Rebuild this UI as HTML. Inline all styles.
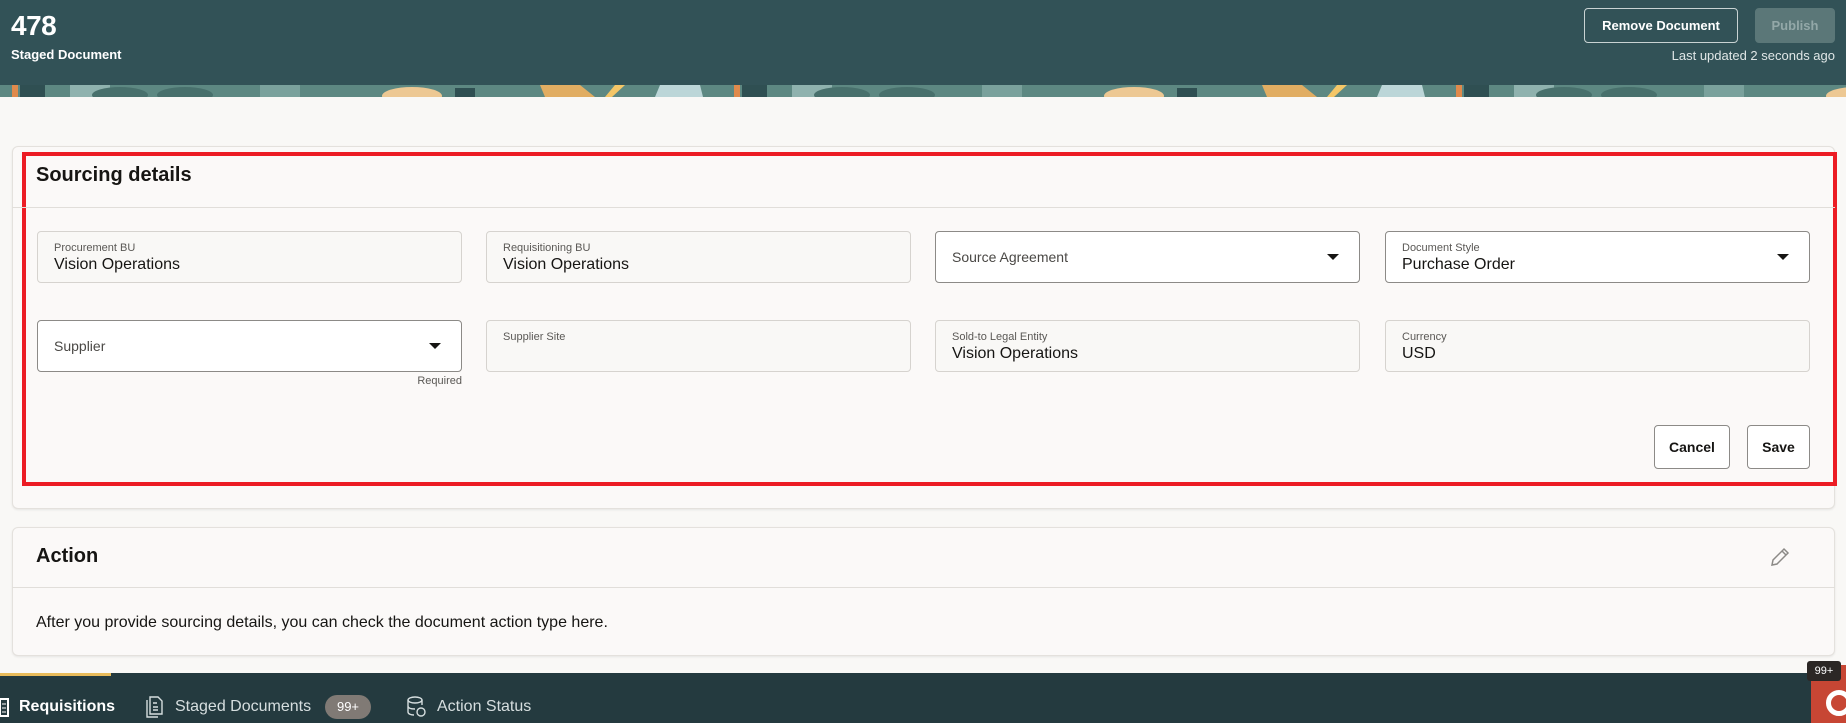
<!DOCTYPE html>
<html><head><meta charset="utf-8">
<style>
*{box-sizing:border-box;margin:0;padding:0}
body{width:1846px;height:723px;overflow:hidden;background:#f9f8f6;font-family:"Liberation Sans",sans-serif;color:#161513;position:relative}
.hdr{position:absolute;left:0;top:0;width:1846px;height:85px;background:#325257}
.band{position:absolute;left:0;top:85px;width:1846px;height:12px}
.t478{position:absolute;left:11px;top:10px;font-size:28px;font-weight:bold;color:#fff;letter-spacing:-0.5px}
.tsub{position:absolute;left:11px;top:47px;font-size:13px;font-weight:bold;color:#fff}
.btn{position:absolute;border:1px solid #c9d3d3;border-radius:4px;color:#fff;font-size:13px;font-weight:bold;display:flex;align-items:center;justify-content:center}
.upd{position:absolute;right:11px;top:48px;font-size:13px;color:#dfe6e6}
.card{position:absolute;left:12px;width:1823px;background:#fbf9f8;border:1px solid #e4e1dd;border-radius:6px;box-shadow:0 1px 2px rgba(0,0,0,.08)}
.red{position:absolute;left:22px;top:152px;width:1815px;height:334px;border:4px solid #ec1c24}
.h2{position:absolute;font-size:20px;font-weight:bold}
.div{position:absolute;left:12px;width:1823px;height:1px;background:#e1deda}
.f{position:absolute;width:425px;height:52px;border:1px solid #d6d3cf;border-radius:4px;background:#f9f8f6}
.f.s{background:#fff;border-color:#8c8a87}
.lab{position:absolute;left:16px;top:10px;font-size:11px;color:#5a5855}
.val{position:absolute;left:16px;top:24px;font-size:16px;color:#161513}
.ph{position:absolute;left:16px;top:17px;font-size:14px;color:#4a4845}
.car{position:absolute;right:20px;top:22px;width:0;height:0;border-left:6px solid transparent;border-right:6px solid transparent;border-top:6px solid #161513}
.b2{position:absolute;border:1px solid #8c8a87;border-radius:4px;background:#fff;font-size:14px;font-weight:bold;display:flex;align-items:center;justify-content:center;height:44px;top:425px}
.bot{position:absolute;left:0;top:673px;width:1846px;height:50px;background:#243a3f}
.tab{position:absolute;top:698px;font-size:16px;color:#d6dedf}
</style></head><body>
<div class="hdr"></div>
<svg class="band" width="1846" height="12" viewBox="0 0 1846 12">
<defs><pattern id="p" width="722" height="12" patternUnits="userSpaceOnUse">
<rect width="722" height="12" fill="#5d8882"/>
<rect x="12" y="0" width="6" height="12" fill="#e08a4c"/>
<rect x="20" y="0" width="25" height="12" fill="#2f4f52"/>
<rect x="70" y="0" width="40" height="12" fill="#8fb2ae"/>
<ellipse cx="120" cy="10" rx="28" ry="8" fill="#48706c"/>
<ellipse cx="185" cy="10" rx="28" ry="8" fill="#48706c"/>
<rect x="260" y="0" width="40" height="12" fill="#7aa19c"/>
<ellipse cx="412" cy="11" rx="30" ry="9" fill="#edc893"/>
<rect x="455" y="3" width="20" height="9" fill="#2f4f52"/>
<polygon points="540,0 580,0 595,12 545,12" fill="#e1ad62"/>
<polygon points="605,12 615,0 625,0 612,12" fill="#f4c667"/>
<polygon points="660,0 700,0 703,12 655,12" fill="#bcd6d8"/>
<rect x="735" y="0" width="6" height="12" fill="#e08a4c"/>
</pattern></defs>
<rect width="1846" height="12" fill="url(#p)"/>
</svg>
<div class="t478">478</div>
<div class="tsub">Staged Document</div>
<div class="btn" style="left:1584px;top:8px;width:154px;height:35px">Remove Document</div>
<div class="btn" style="left:1755px;top:8px;width:80px;height:35px;background:#5b7778;border-color:#5b7778;color:#93a8a8">Publish</div>
<div class="upd">Last updated 2 seconds ago</div>

<div class="card" style="top:146px;height:363px"></div>
<div class="red"></div>
<div class="h2" style="left:36px;top:164px">Sourcing details</div>
<div class="div" style="top:207px"></div>

<div class="f" style="left:37px;top:231px"><div class="lab">Procurement BU</div><div class="val">Vision Operations</div></div>
<div class="f" style="left:486px;top:231px"><div class="lab">Requisitioning BU</div><div class="val">Vision Operations</div></div>
<div class="f s" style="left:935px;top:231px"><div class="ph">Source Agreement</div><div class="car"></div></div>
<div class="f s" style="left:1385px;top:231px"><div class="lab">Document Style</div><div class="val">Purchase Order</div><div class="car"></div></div>

<div class="f s" style="left:37px;top:320px"><div class="ph">Supplier</div><div class="car"></div></div>
<div style="position:absolute;left:300px;width:162px;text-align:right;top:375px;font-size:11px;color:#5a5855">Required</div>
<div class="f" style="left:486px;top:320px"><div class="lab">Supplier Site</div></div>
<div class="f" style="left:935px;top:320px"><div class="lab">Sold-to Legal Entity</div><div class="val">Vision Operations</div></div>
<div class="f" style="left:1385px;top:320px"><div class="lab">Currency</div><div class="val">USD</div></div>

<div class="b2" style="left:1654px;width:76px">Cancel</div>
<div class="b2" style="left:1747px;width:63px">Save</div>

<div class="card" style="top:527px;height:129px"></div>
<div class="h2" style="left:36px;top:545px">Action</div>
<svg style="position:absolute;left:1769px;top:546px" width="22" height="22" viewBox="0 0 22 22"><path d="M3 19 L4 14 L15 3 L19 7 L8 18 Z M13 5 L17 9" fill="none" stroke="#8c8a87" stroke-width="1.5"/></svg>
<div class="div" style="top:587px"></div>
<div style="position:absolute;left:36px;top:614px;font-size:16px">After you provide sourcing details, you can check the document action type here.</div>

<div class="bot"></div>
<div style="position:absolute;left:0;top:673px;width:111px;height:3px;background:#e8bb5a"></div>
<svg style="position:absolute;left:0;top:698px" width="9" height="19"><rect x="0" y="1" width="8" height="17" fill="none" stroke="#fff" stroke-width="2"/><path d="M2 6h4M2 10h4M2 14h4" stroke="#fff"/></svg>
<div class="tab" style="left:19px;color:#fff;font-weight:bold">Requisitions</div>
<svg style="position:absolute;left:146px;top:696px" width="18" height="22"><path d="M1 4v17h11M4 1h8l4 4v13H4z M7 7h4M7 11h5M7 14h5" fill="none" stroke="#d6dedf" stroke-width="1.4"/></svg>
<div class="tab" style="left:175px">Staged Documents</div>
<div style="position:absolute;left:325px;top:695px;width:46px;height:24px;border-radius:12px;background:#807a75;color:#fff;font-size:13px;text-align:center;line-height:24px">99+</div>
<svg style="position:absolute;left:406px;top:696px" width="22" height="22"><ellipse cx="9" cy="4" rx="7" ry="3" fill="none" stroke="#d6dedf" stroke-width="1.4"/><path d="M2 4v12c0 2 3 3 6 3M16 4v5M2 10c0 2 3 3 7 3" fill="none" stroke="#d6dedf" stroke-width="1.4"/><circle cx="15" cy="16" r="4" fill="none" stroke="#d6dedf" stroke-width="1.4"/></svg>
<div class="tab" style="left:437px">Action Status</div>

<div style="position:absolute;left:1811px;top:665px;width:35px;height:58px;background:#c74634"></div>
<div style="position:absolute;left:1826px;top:690px;width:26px;height:26px;border:5px solid #fff;border-radius:50%"></div>
<div style="position:absolute;left:1807px;top:661px;width:34px;height:20px;background:#2b2725;border-radius:3px;color:#fff;font-size:11px;text-align:center;line-height:20px">99+</div>
</body></html>
